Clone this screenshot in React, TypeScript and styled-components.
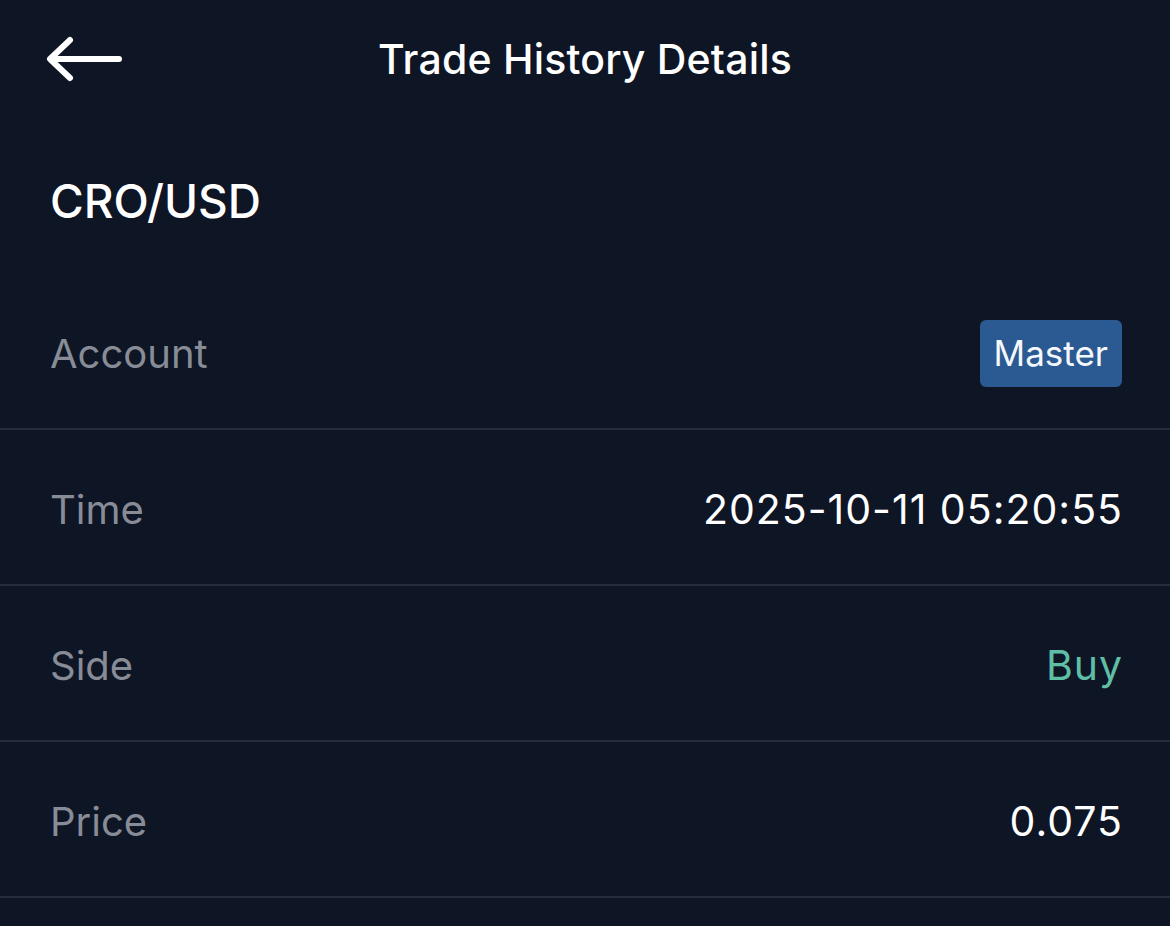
import React from "react";
import styled, { createGlobalStyle } from "styled-components";

const GlobalStyle = createGlobalStyle`
  html, body {
    margin: 0;
    padding: 0;
    background-color: #0e1525;
  }
  body {
    font-family: Inter, "Noto Sans", "Liberation Sans", sans-serif;
    -webkit-font-smoothing: antialiased;
  }
`;

const Screen = styled.div`
  width: 1170px;
  min-height: 926px;
  background-color: #0e1525;
  color: #ffffff;
  overflow: hidden;
`;

const Header = styled.header`
  position: relative;
  height: 120px;
  display: flex;
  align-items: center;
  justify-content: center;
`;

const BackButton = styled.button`
  position: absolute;
  left: 44px;
  top: 35px;
  width: 82px;
  height: 48px;
  padding: 0;
  background: transparent;
  border: none;
  cursor: pointer;
  display: flex;
  align-items: center;
`;

const Title = styled.h1`
  margin: 0 0 2px;
  font-size: 41px;
  font-weight: 500;
  letter-spacing: 0.2px;
  color: #ffffff;
`;

const PairSection = styled.div`
  height: 154px;
  padding: 8px 48px 0 50px;
  box-sizing: border-box;
  display: flex;
  align-items: center;
`;

const Pair = styled.h2`
  margin: 0;
  font-size: 46px;
  font-weight: 500;
  color: #ffffff;
`;

const Row = styled.div`
  height: 156px;
  box-sizing: border-box;
  padding: 4px 48px 0 50px;
  display: flex;
  align-items: center;
  justify-content: space-between;
  border-bottom: 2px solid #272d3c;
`;

const Label = styled.span`
  font-size: 40px;
  font-weight: 400;
  color: #878c97;
`;

const Value = styled.span<{ $tone?: "buy" | "default" }>`
  font-size: 41px;
  font-weight: 400;
  letter-spacing: 1px;
  margin-right: -1px;
  color: ${(p) => (p.$tone === "buy" ? "#5fbfa6" : "#ffffff")};
`;

const Badge = styled.span`
  display: inline-flex;
  align-items: center;
  justify-content: center;
  height: 67px;
  padding: 0 14px;
  border-radius: 6px;
  background-color: #2b5a92;
  color: #f4f7fb;
  font-size: 35px;
  font-weight: 400;
`;

const BackArrow = () => (
  <svg width="80" height="48" viewBox="0 0 80 48" fill="none">
    <path
      d="M75 24H7M26 5L6 24L26 43"
      stroke="#ffffff"
      strokeWidth="6"
      strokeLinecap="round"
      strokeLinejoin="round"
    />
  </svg>
);

const rows: { label: string; value: string; tone?: "buy" | "default" }[] = [
  { label: "Time", value: "2025-10-11 05:20:55" },
  { label: "Side", value: "Buy", tone: "buy" },
  { label: "Price", value: "0.075" },
];

const App: React.FC = () => {
  return (
    <Screen>
      <GlobalStyle />
      <Header>
        <BackButton aria-label="Back">
          <BackArrow />
        </BackButton>
        <Title>Trade History Details</Title>
      </Header>
      <PairSection>
        <Pair>CRO/USD</Pair>
      </PairSection>
      <Row>
        <Label>Account</Label>
        <Badge>Master</Badge>
      </Row>
      {rows.map((r) => (
        <Row key={r.label}>
          <Label>{r.label}</Label>
          <Value $tone={r.tone}>{r.value}</Value>
        </Row>
      ))}
    </Screen>
  );
};

export default App;
